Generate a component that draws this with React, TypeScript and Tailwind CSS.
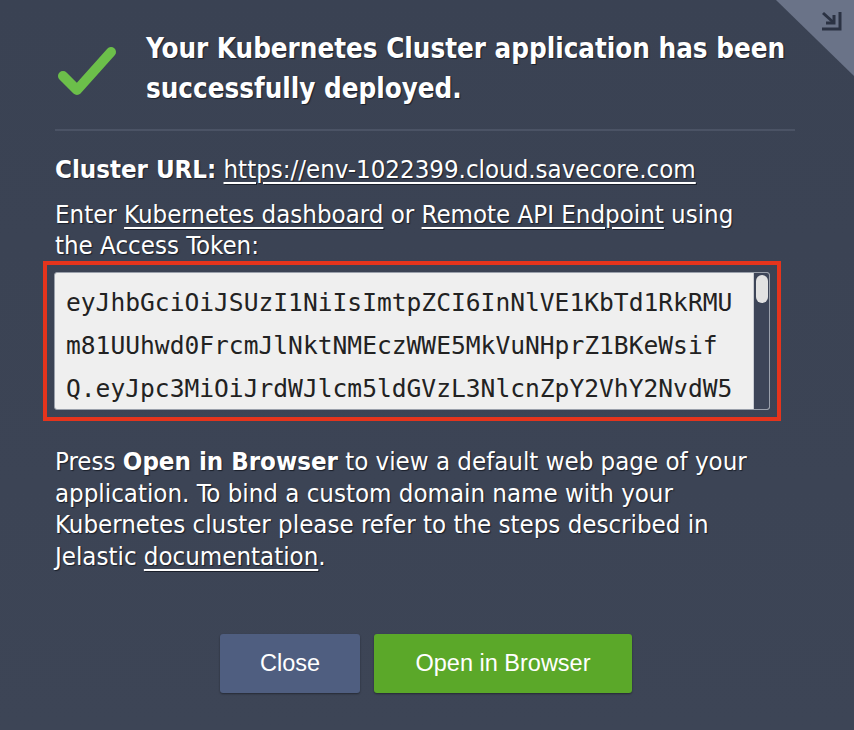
export default function App() {
    const token = [
        "eyJhbGciOiJSUzI1NiIsImtpZCI6InNlVE1KbTd1RkRMU",
        "m81UUhwd0FrcmJlNktNMEczWWE5MkVuNHprZ1BKeWsif",
        "Q.eyJpc3MiOiJrdWJlcm5ldGVzL3NlcnZpY2VhY2NvdW5",
    ];

    return (
        <div
            className="relative w-[854px] h-[730px] overflow-hidden bg-gradient-to-b from-[#3a4253] to-[#3d4556] text-white [text-shadow:1px_1px_1px_#1a1f2a]"
            style={{ fontFamily: '"DejaVu Sans Condensed", "DejaVu Sans", sans-serif' }}
        >
            {/* corner fold */}
            <div className="absolute top-0 right-0 w-[78px] h-[76px] bg-[#6a7388] [clip-path:polygon(0_0,100%_0,100%_100%)]" />
            <svg className="absolute top-[10px] right-[10px]" width="24" height="22" viewBox="0 0 24 22">
                <path d="M3 3 L13 12" stroke="#2b3243" strokeWidth="3" fill="none" />
                <path d="M6 13 H14 V5" stroke="#2b3243" strokeWidth="3" fill="none" />
                <path d="M2 19 H20 V2" stroke="#2b3243" strokeWidth="3" fill="none" />
            </svg>

            <div className="pl-[55px] pr-[40px] pt-[28px]">
                <div className="flex items-start">
                    <svg className="mt-[14px] shrink-0" width="64" height="56" viewBox="0 0 64 56">
                        <path
                            d="M8 34 L22 48 L56 10"
                            stroke="#6cbf4a"
                            strokeWidth="10"
                            strokeLinecap="round"
                            strokeLinejoin="round"
                            fill="none"
                        />
                    </svg>
                    <h1 className="ml-[27px] text-[27.5px] leading-[40px] font-bold whitespace-nowrap">
                        Your Kubernetes Cluster application has been
                        <br />
                        successfully deployed.
                    </h1>
                </div>

                <div className="mt-[21px] mr-[19px] h-[2px] bg-[#4b5365]" />

                <div className="mt-[22px] text-[25.6px] leading-[32px]">
                    <span className="font-bold">Cluster URL:</span>{" "}
                    <a className="underline underline-offset-[4px]">https://env-1022399.cloud.savecore.com</a>
                </div>

                <p className="mt-[14px] text-[25.6px] leading-[31px] whitespace-nowrap">
                    Enter <a className="underline underline-offset-[4px]">Kubernetes dashboard</a> or{" "}
                    <a className="underline underline-offset-[4px]">Remote API Endpoint</a> using
                    <br />
                    the Access Token:
                </p>

                <div className="-ml-[12px] w-[738px] border-[4px] border-[#e5341c] p-[7px]">
                    <div className="relative h-[138px] overflow-hidden rounded-[3px] border border-[#9aa0ab] bg-[#efefef] [text-shadow:none]">
                        <div
                            className="pl-[11px] pt-[8px] text-[24.6px] leading-[43px] text-[#222]"
                            style={{ fontFamily: '"DejaVu Sans Mono", monospace' }}
                        >
                            {token.map((t) => (
                                <div key={t} className="whitespace-nowrap">
                                    {t}
                                </div>
                            ))}
                        </div>
                        <div className="absolute top-0 right-0 w-[16px] h-full bg-[#3d4558] border-l border-[#c9ccd2]">
                            <div className="mx-auto mt-[2px] w-[12px] h-[28px] rounded-[6px] bg-[#e2e2e2]" />
                        </div>
                    </div>
                </div>

                <p className="mt-[25px] text-[25.6px] leading-[31.5px] whitespace-nowrap">
                    Press <b>Open in Browser</b> to view a default web page of your
                    <br />
                    application. To bind a custom domain name with your
                    <br />
                    Kubernetes cluster please refer to the steps described in
                    <br />
                    Jelastic <a className="underline underline-offset-[4px]">documentation</a>.
                </p>

                <div
                    className="mt-[62px] flex justify-center gap-[14px] pr-[17px] text-[23.5px] [text-shadow:1px_1px_1px_#222]"
                    style={{ fontFamily: '"Liberation Sans", Arial, sans-serif' }}
                >
                    <button className="w-[140px] h-[59px] rounded-[3px] bg-[#4f5e80] shadow-[0_1px_2px_rgba(0,0,0,0.4)]">
                        Close
                    </button>
                    <button className="w-[258px] h-[59px] rounded-[3px] bg-[#5ba829] shadow-[0_1px_2px_rgba(0,0,0,0.4)]">
                        Open in Browser
                    </button>
                </div>
            </div>
        </div>
    );
}
